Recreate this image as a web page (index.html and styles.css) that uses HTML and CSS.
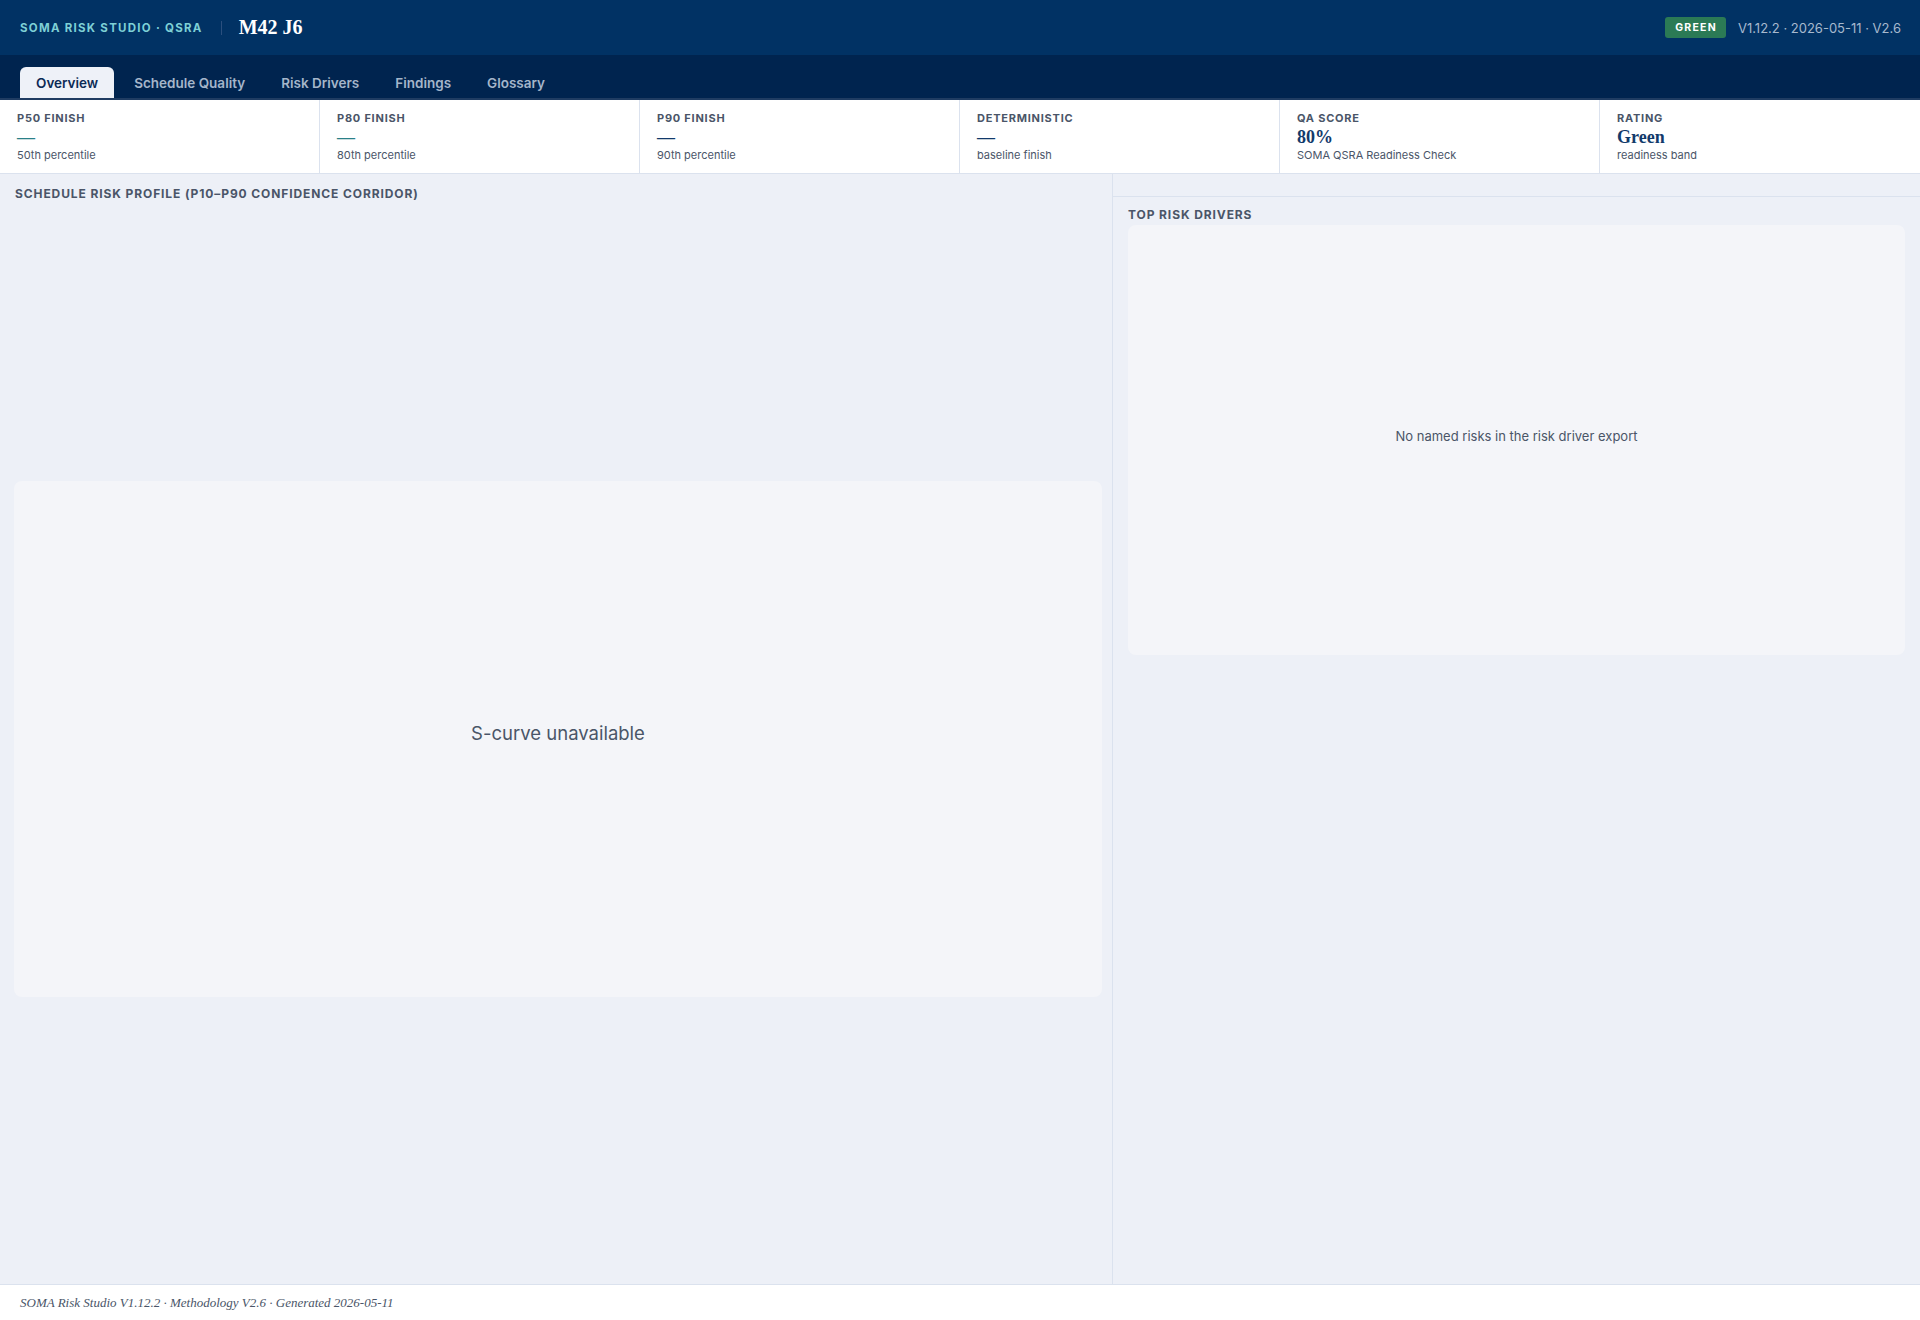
FILE: index.html
```html
<!DOCTYPE html>
<html lang="en">
<head>
  <meta charset="UTF-8" />
  <meta name="viewport" content="width=device-width, initial-scale=1.0"/>
  <title>SOMA Risk Studio · M42 J6</title>
  <link rel="stylesheet" href="styles.css">
</head>
<body>
  <header class="topbar">
    <div class="brand">
      <span class="brand-name">SOMA Risk Studio · QSRA</span>
      <span class="brand-sep"></span>
      <span class="project">M42 J6</span>
    </div>
    <div class="meta">
      <span class="badge">Green</span>
      <span class="version">V1.12.2 · 2026-05-11 · V2.6</span>
    </div>
  </header>

  <nav class="tabs">
    <button class="tab active">Overview</button>
    <button class="tab">Schedule Quality</button>
    <button class="tab">Risk Drivers</button>
    <button class="tab">Findings</button>
    <button class="tab">Glossary</button>
  </nav>

  <section class="kpis">
    <div class="kpi">
      <div class="kpi-label">P50 Finish</div>
      <div class="kpi-value teal">—</div>
      <div class="kpi-sub">50th percentile</div>
    </div>
    <div class="kpi">
      <div class="kpi-label">P80 Finish</div>
      <div class="kpi-value teal">—</div>
      <div class="kpi-sub">80th percentile</div>
    </div>
    <div class="kpi">
      <div class="kpi-label">P90 Finish</div>
      <div class="kpi-value">—</div>
      <div class="kpi-sub">90th percentile</div>
    </div>
    <div class="kpi">
      <div class="kpi-label">Deterministic</div>
      <div class="kpi-value">—</div>
      <div class="kpi-sub">baseline finish</div>
    </div>
    <div class="kpi">
      <div class="kpi-label">QA Score</div>
      <div class="kpi-value">80%</div>
      <div class="kpi-sub">SOMA QSRA Readiness Check</div>
    </div>
    <div class="kpi">
      <div class="kpi-label">Rating</div>
      <div class="kpi-value">Green</div>
      <div class="kpi-sub">readiness band</div>
    </div>
  </section>

  <main class="content">
    <div class="panel panel-left">
      <h3 class="panel-title">Schedule Risk Profile (P10–P90 Confidence Corridor)</h3>
      <div class="chart-wrap">
        <div class="empty-box chart-box">S-curve unavailable</div>
      </div>
    </div>

    <div class="panel-right">
      <div class="right-strip"></div>
      <div class="panel">
        <h3 class="panel-title">Top Risk Drivers</h3>
        <div class="empty-box drivers-box">No named risks in the risk driver export</div>
      </div>
    </div>
  </main>

  <footer class="footer">
    SOMA Risk Studio V1.12.2 · Methodology V2.6 · Generated 2026-05-11
  </footer>
</body>
</html>
```

FILE: styles.css
```css
* {
  box-sizing: border-box;
}

body, html {
  height: 100%;
  margin: 0;
  font-family: Inter, "Noto Sans", Arial, sans-serif;
  background-color: #edf0f7;
  color: #4a5568;
}

body {
  display: flex;
  flex-direction: column;
}

/* header */
.topbar {
  height: 55px;
  flex-shrink: 0;
  display: flex;
  align-items: center;
  justify-content: space-between;
  padding: 0 19px 0 20px;
  background-color: #013264;
}

.brand {
  display: flex;
  align-items: center;
}

.brand-name {
  color: #7ed0d6;
  font-size: 11.5px;
  font-weight: 700;
  letter-spacing: 0.11em;
  text-transform: uppercase;
}

.brand-sep {
  width: 1px;
  height: 14px;
  background-color: #2b4f7e;
  margin: 0 17px 0 18px;
}

.project {
  color: #fff;
  font-family: "Liberation Serif", "DejaVu Serif", serif;
  font-weight: 700;
  font-size: 20px;
}

.meta {
  display: flex;
  align-items: center;
  gap: 12px;
}

.badge {
  background-color: #2b7a55;
  color: #fff;
  font-size: 10.5px;
  font-weight: 700;
  letter-spacing: 0.12em;
  text-transform: uppercase;
  padding: 4px 9px 4px 10px;
  border-radius: 3px;
}

.version {
  color: #a7b9ce;
  font-size: 13px;
}

/* tabs */
.tabs {
  height: 45px;
  flex-shrink: 0;
  display: flex;
  align-items: flex-end;
  gap: 4px;
  padding: 12px 20px 0;
  background-color: #00244f;
  border-bottom: 2px solid #1f3c62;
}

.tab {
  font-family: inherit;
  font-size: 13.5px;
  font-weight: 600;
  color: #a5b6ca;
  background: none;
  border: none;
  padding: 0 16px;
  height: 31px;
  border-radius: 6px 6px 0 0;
  cursor: pointer;
}

.tab.active {
  background-color: #eef1f8;
  color: #0b2a55;
}

/* kpi strip */
.kpis {
  flex-shrink: 0;
  display: grid;
  grid-template-columns: repeat(6, 1fr);
  background-color: #fff;
  border-bottom: 1px solid #dbe2ee;
}

.kpi {
  height: 73px;
  padding: 12px 17px 0;
  border-right: 1px solid #dbe2ee;
}

.kpi:last-child {
  border-right: none;
}

.kpi-label {
  font-size: 11px;
  font-weight: 700;
  letter-spacing: 0.07em;
  text-transform: uppercase;
  color: #4a5568;
  line-height: 13px;
}

.kpi-value {
  font-family: "Liberation Serif", "DejaVu Serif", serif;
  font-weight: 700;
  font-size: 18px;
  line-height: 21px;
  margin-top: 2px;
  color: #123a6b;
}

.kpi-value.teal {
  color: #2a8088;
}

.kpi-sub {
  font-size: 11px;
  line-height: 15px;
  color: #4a5568;
}

/* main */
.content {
  flex: 1;
  display: grid;
  grid-template-columns: 1113px 1fr;
  min-height: 0;
}

.panel {
  padding: 13px 15px 15px;
}

.panel-left {
  display: flex;
  flex-direction: column;
  padding: 13px 10px 15px 14px;
  border-right: 1px solid #dbe2ee;
}

.panel-title {
  margin: 0;
  font-size: 12px;
  font-weight: 700;
  letter-spacing: 0.075em;
  text-transform: uppercase;
  color: #4a5568;
  line-height: 14px;
}

.panel-left .panel-title {
  padding-left: 1px;
}

.chart-wrap {
  flex: 1;
  display: flex;
  align-items: center;
  padding-top: 8px;
}

.empty-box {
  background-color: #f4f5f9;
  border-radius: 8px;
  display: flex;
  align-items: center;
  justify-content: center;
  padding-bottom: 9px;
}

.chart-box {
  width: 100%;
  height: 516px;
  font-size: 18.5px;
  padding-bottom: 12px;
}

.right-strip {
  height: 23px;
  border-bottom: 1px solid #dbe2ee;
}

.panel-right .panel {
  padding: 11px 15px 15px;
}

.drivers-box {
  margin-top: 3px;
  height: 430px;
  font-size: 13px;
}

/* footer */
.footer {
  flex-shrink: 0;
  height: 36px;
  display: flex;
  align-items: center;
  padding: 0 20px;
  background-color: #fff;
  border-top: 1px solid #dbe2ee;
  font-family: "Liberation Serif", "DejaVu Serif", serif;
  font-style: italic;
  font-size: 13px;
  color: #4a5568;
}
```
